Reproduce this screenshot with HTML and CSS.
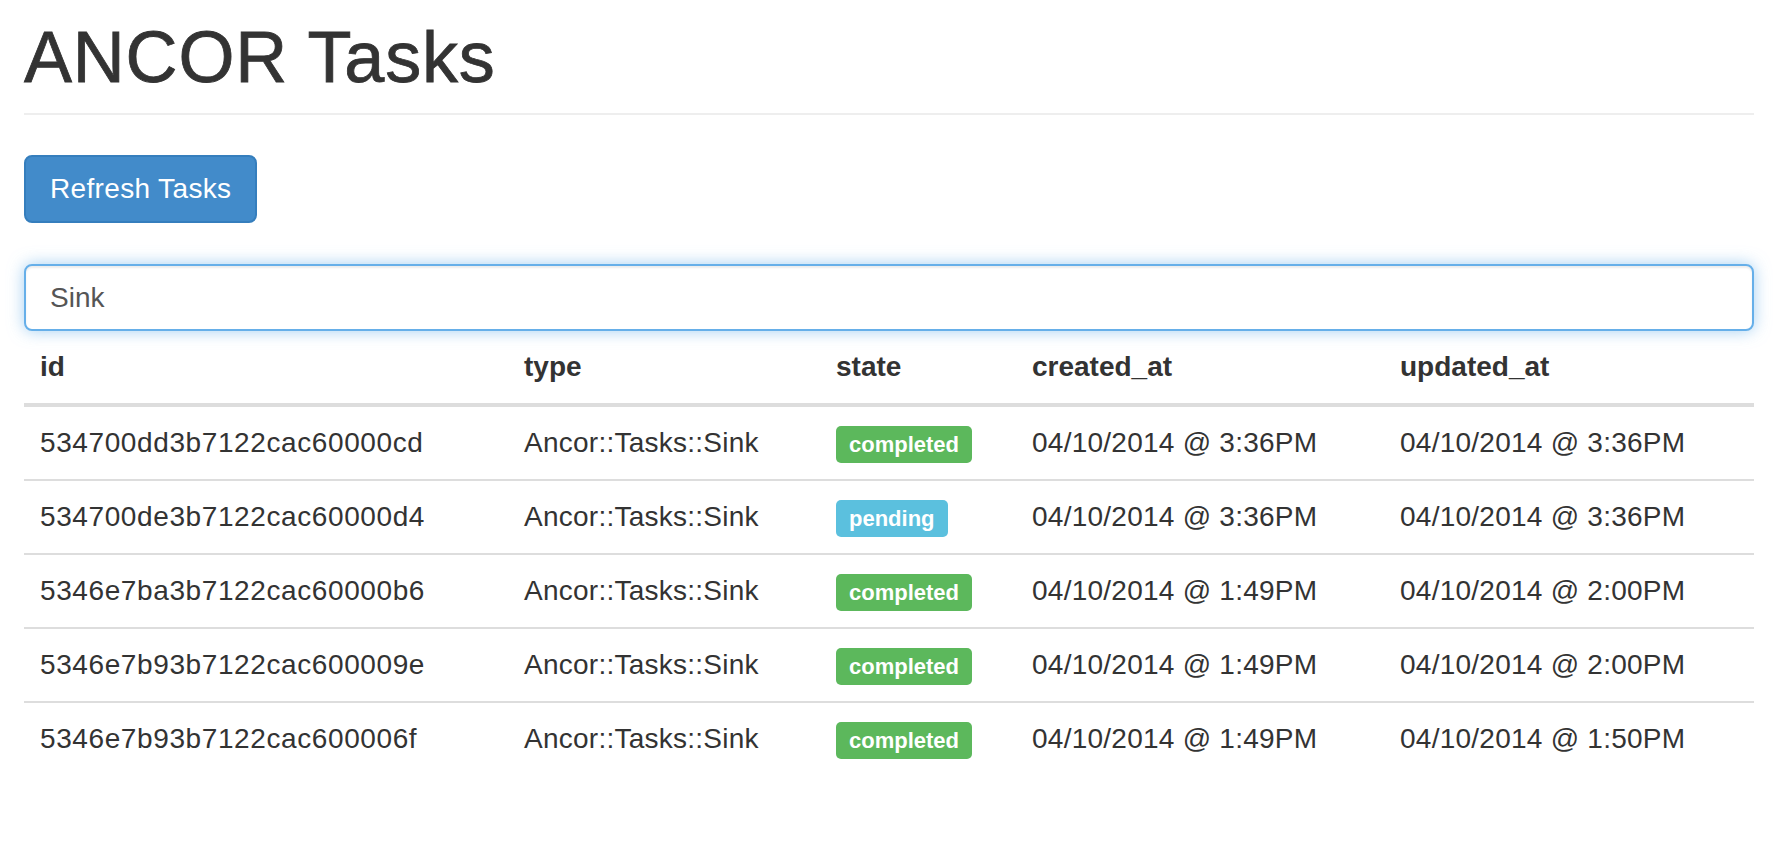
FILE: index.html
```html
<!DOCTYPE html>
<html>
<head>
<meta charset="utf-8">
<title>ANCOR Tasks</title>
<link rel="stylesheet" href="styles.css">
</head>
<body>
<div class="page">
  <div class="page-header">
    <h1>ANCOR Tasks</h1>
  </div>
  <div class="actions">
    <button class="btn btn-primary" type="button">Refresh Tasks</button>
  </div>
  <input class="form-control" type="text" value="Sink">
  <table class="table">
    <colgroup>
      <col class="c-id"><col class="c-type"><col class="c-state"><col class="c-created"><col class="c-updated">
    </colgroup>
    <thead>
      <tr><th>id</th><th>type</th><th>state</th><th>created_at</th><th>updated_at</th></tr>
    </thead>
    <tbody>
      <tr><td class="id">534700dd3b7122cac60000cd</td><td>Ancor::Tasks::Sink</td><td><span class="label label-success">completed</span></td><td>04/10/2014 @ 3:36PM</td><td>04/10/2014 @ 3:36PM</td></tr>
      <tr><td class="id">534700de3b7122cac60000d4</td><td>Ancor::Tasks::Sink</td><td><span class="label label-info">pending</span></td><td>04/10/2014 @ 3:36PM</td><td>04/10/2014 @ 3:36PM</td></tr>
      <tr><td class="id">5346e7ba3b7122cac60000b6</td><td>Ancor::Tasks::Sink</td><td><span class="label label-success">completed</span></td><td>04/10/2014 @ 1:49PM</td><td>04/10/2014 @ 2:00PM</td></tr>
      <tr><td class="id">5346e7b93b7122cac600009e</td><td>Ancor::Tasks::Sink</td><td><span class="label label-success">completed</span></td><td>04/10/2014 @ 1:49PM</td><td>04/10/2014 @ 2:00PM</td></tr>
      <tr><td class="id">5346e7b93b7122cac600006f</td><td>Ancor::Tasks::Sink</td><td><span class="label label-success">completed</span></td><td>04/10/2014 @ 1:49PM</td><td>04/10/2014 @ 1:50PM</td></tr>
    </tbody>
  </table>
</div>
</body>
</html>
```

FILE: styles.css
```css
* { box-sizing: border-box; }

html, body {
  margin: 0;
  padding: 0;
  background: #fff;
}

body {
  font-family: "Liberation Sans", Arial, Helvetica, sans-serif;
  font-size: 28px;
  line-height: 40px;
  color: #333;
}

.page {
  padding: 0 32px 0 24px;
}

.page-header {
  padding-top: 18px;
  padding-bottom: 16px;
  border-bottom: 2px solid #eee;
  margin-bottom: 40px;
}

.page-header h1 {
  margin: 0;
  font-size: 72px;
  line-height: 79px;
  font-weight: 500;
  letter-spacing: 0.8px;
  -webkit-text-stroke: 0.8px #333;
  color: #333;
}

.actions {
  margin-bottom: 41px;
  display: flex;
}

.btn {
  font-family: inherit;
  font-size: 28px;
  line-height: 40px;
  height: 68px;
  padding: 12px 24px;
  border-radius: 8px;
  border: 2px solid transparent;
  letter-spacing: 0.35px;
  cursor: pointer;
}

.btn-primary {
  color: #fff;
  background-color: #428bca;
  border-color: #357ebd;
}

.form-control {
  display: block;
  width: 100%;
  height: 67px;
  padding: 12px 24px;
  font-family: inherit;
  font-size: 28px;
  line-height: 40px;
  color: #555;
  background: #fff;
  border: 2px solid #66afe9;
  border-radius: 8px;
  outline: 0;
  box-shadow: inset 0 2px 2px rgba(0,0,0,.075), 0 0 16px rgba(102,175,233,.6);
  margin: 0;
}

.table {
  width: 100%;
  border-collapse: collapse;
  border-spacing: 0;
  table-layout: fixed;
}

.c-id { width: 484px; }
.c-type { width: 312px; }
.c-state { width: 196px; }
.c-created { width: 368px; }

.table th,
.table td {
  padding: 16px;
  line-height: 40px;
  text-align: left;
  vertical-align: top;
  white-space: nowrap;
}

.table th {
  font-weight: bold;
  border-bottom: 4px solid #ddd;
}

.table td {
  border-top: 2px solid #ddd;
  letter-spacing: 0.25px;
}

.table td.id {
  letter-spacing: 0.6px;
}

.table tbody tr:first-child td {
  border-top: 0;
}

.label {
  display: inline;
  font-size: 22px;
  font-weight: bold;
  line-height: 1;
  color: #fff;
  padding: 6px 13px 6px;
  border-radius: 5px;
  letter-spacing: 0;
  white-space: nowrap;
}

.label-success { background-color: #5cb85c; }
.label-info { background-color: #5bc0de; }
```
